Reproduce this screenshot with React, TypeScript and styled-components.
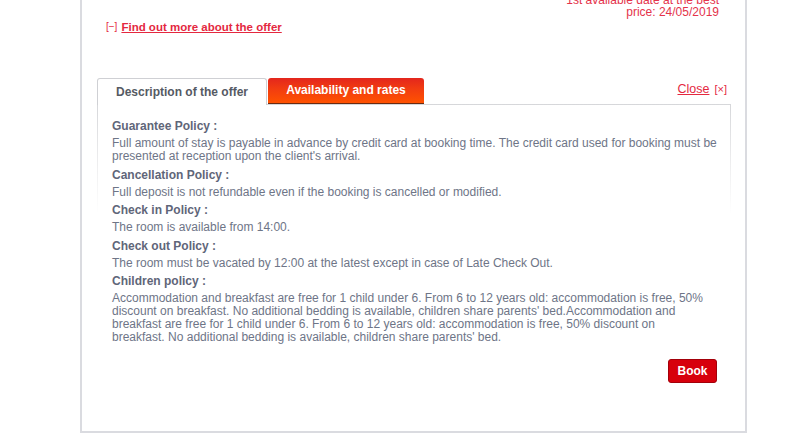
import React from "react";
import styled, { createGlobalStyle } from "styled-components";

const GlobalStyle = createGlobalStyle`
  html, body {
    margin: 0;
    padding: 0;
    background: #ffffff;
    overflow: hidden;
  }
  body {
    font-family: "Liberation Sans", Arial, sans-serif;
  }
`;

type Policy = { title: string; text: string; maxWidth?: number };

const policies: Policy[] = [
  {
    title: "Guarantee Policy :",
    text:
      "Full amount of stay is payable in advance by credit card at booking time. The credit card used for booking must be presented at reception upon the client's arrival.",
  },
  {
    title: "Cancellation Policy :",
    text: "Full deposit is not refundable even if the booking is cancelled or modified.",
  },
  { title: "Check in Policy :", text: "The room is available from 14:00." },
  {
    title: "Check out Policy :",
    text: "The room must be vacated by 12:00 at the latest except in case of Late Check Out.",
  },
  {
    title: "Children policy :",
    text:
      "Accommodation and breakfast are free for 1 child under 6. From 6 to 12 years old: accommodation is free, 50% discount on breakfast. No additional bedding is available, children share parents' bed.Accommodation and breakfast are free for 1 child under 6. From 6 to 12 years old: accommodation is free, 50% discount on breakfast. No additional bedding is available, children share parents' bed.",
    maxWidth: 596,
  },
];

const Card = styled.div`
  margin: -12px 0 0 80px;
  width: 634px;
  border: 2px solid #dadbe0;
  border-top: none;
  padding: 0 14px 47px 15px;
`;

const Header = styled.div`
  display: flex;
  justify-content: space-between;
  padding: 0 12px 0 9px;
`;

const HotelCol = styled.div`
  display: flex;
  flex-direction: column;
`;

const HotelName = styled.div`
  font-size: 13px;
  line-height: 14px;
  color: #8b909a;
`;

const MoreRow = styled.div`
  display: flex;
  align-items: center;
  gap: 4px;
  margin-top: 18px;
  font-size: 11.5px;
  line-height: 14px;
`;

const Bracket = styled.span<{ $size?: number }>`
  font-size: ${(p) => p.$size ?? 10}px;
  color: #e4283f;
`;

const RedLink = styled.a<{ $bold?: boolean }>`
  color: #e4283f;
  text-decoration: underline;
  font-weight: ${(p) => (p.$bold ? "bold" : "normal")};
  cursor: pointer;
`;

const DateNote = styled.div`
  text-align: right;
  font-size: 12px;
  line-height: 12px;
  padding-top: 6px;
  color: #e4334b;
  width: 190px;
`;

const TabRow = styled.div`
  display: flex;
  align-items: flex-end;
  margin-top: 44px;
`;

const Tab = styled.div<{ $active?: boolean; $width: number }>`
  box-sizing: border-box;
  width: ${(p) => p.$width}px;
  height: ${(p) => (p.$active ? 27 : 26)}px;
  display: flex;
  align-items: center;
  justify-content: center;
  font-size: 12px;
  font-weight: bold;
  border-radius: 3px 3px 0 0;
  ${(p) =>
    p.$active
      ? `
    background: #ffffff;
    color: #555a63;
    border: 1px solid #cfd0d4;
    border-bottom: none;
    margin-bottom: -1px;
    position: relative;
    z-index: 1;
  `
      : `
    background: linear-gradient(to bottom, #e3261d 0%, #f23d10 45%, #ff5200 100%);
    color: #ffffff;
    border-bottom: 1px solid #6b2a10;
    margin-left: 1px;
    margin-bottom: 0;
    padding-bottom: 1px;
  `}
`;

const CloseBox = styled.div`
  margin-left: auto;
  align-self: center;
  display: flex;
  align-items: center;
  gap: 5px;
  font-size: 12.5px;
  padding-right: 4px;
  margin-top: -4px;
`;

const Panel = styled.div`
  border: 1px solid;
  border-image: linear-gradient(to bottom, #d6d7da 0px, #eeeeef 60px, rgba(255, 255, 255, 0) 110px) 1;
  padding: 12px 12px 0 14px;
  color: #6e7587;
  font-size: 12px;
`;

const PolicyTitle = styled.div`
  font-weight: bold;
  color: #5f6679;
  line-height: 18px;
`;

const PolicyText = styled.div<{ $maxWidth?: number }>`
  line-height: 13px;
  margin: 2px 0 2.6px;
  max-width: ${(p) => (p.$maxWidth ? `${p.$maxWidth}px` : "none")};
`;

const Actions = styled.div`
  display: flex;
  justify-content: flex-end;
  margin-top: 15px;
  padding-right: 1px;
`;

const BookButton = styled.button`
  width: 49px;
  height: 24px;
  background: #d7000c;
  border: 1px solid #a3000a;
  border-radius: 3px;
  color: #ffffff;
  font-family: "Liberation Sans", Arial, sans-serif;
  font-weight: bold;
  font-size: 12px;
  padding: 0;
  cursor: pointer;
`;

export default function App() {
  return (
    <>
      <GlobalStyle />
      <Card>
        <Header>
          <HotelCol>
            <HotelName>Accomotels.com</HotelName>
            <MoreRow>
              <Bracket>[−]</Bracket>
              <RedLink $bold>Find out more about the offer</RedLink>
            </MoreRow>
          </HotelCol>
          <DateNote>
            1st available date at the best
            <br />
            price: 24/05/2019
          </DateNote>
        </Header>

        <TabRow>
          <Tab $active $width={170}>
            Description of the offer
          </Tab>
          <Tab $width={156}>Availability and rates</Tab>
          <CloseBox>
            <RedLink>Close</RedLink>
            <Bracket $size={11}>[×]</Bracket>
          </CloseBox>
        </TabRow>

        <Panel>
          {policies.map((p) => (
            <div key={p.title}>
              <PolicyTitle>{p.title}</PolicyTitle>
              <PolicyText $maxWidth={p.maxWidth}>{p.text}</PolicyText>
            </div>
          ))}
          <Actions>
            <BookButton type="button">Book</BookButton>
          </Actions>
        </Panel>
      </Card>
    </>
  );
}
